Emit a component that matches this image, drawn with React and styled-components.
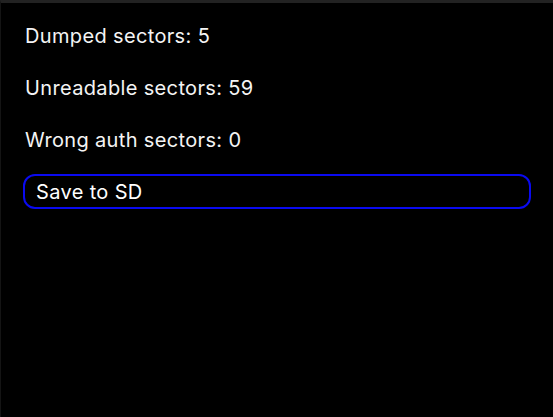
import React from 'react';
import styled, { createGlobalStyle } from 'styled-components';

const Global = createGlobalStyle`
    html, body {
        margin: 0;
        padding: 0;
        background: #000;
    }
    body {
        font-family: Inter, "Noto Sans", sans-serif;
        color: #fff;
    }
`

const Screen = styled.div`
    box-sizing: border-box;
    width: 553px;
    height: 417px;
    background: #000;
    border-top: 3px solid #222;
    border-left: 1px solid #141414;
    padding: 21px 22px 0 22px;
    display: flex;
    flex-direction: column;
`

const Stat = styled.p`
    margin: 0 0 28px 2px;
    font-size: 20px;
    line-height: 24px;
    letter-spacing: 0.35px;
    color: #f4f4f4;
`

const SaveBtn = styled.button`
    box-sizing: border-box;
    margin-top: -6px;
    height: 35px;
    width: 100%;
    display: flex;
    align-items: center;
    padding: 0 11px;
    background: transparent;
    border: 2px solid #0a0af0;
    border-radius: 12px;
    color: #fff;
    font-family: inherit;
    font-size: 20px;
    letter-spacing: 0.35px;
    cursor: pointer;
`

const stats = [
    ['Dumped sectors', 5],
    ['Unreadable sectors', 59],
    ['Wrong auth sectors', 0],
];

export default function App() {
    return (
        <>
            <Global />
            <Screen>
                {stats.map(([label, n]) => (
                    <Stat key={label}>{label}: {n}</Stat>
                ))}
                <SaveBtn>Save to SD</SaveBtn>
            </Screen>
        </>
    );
}
